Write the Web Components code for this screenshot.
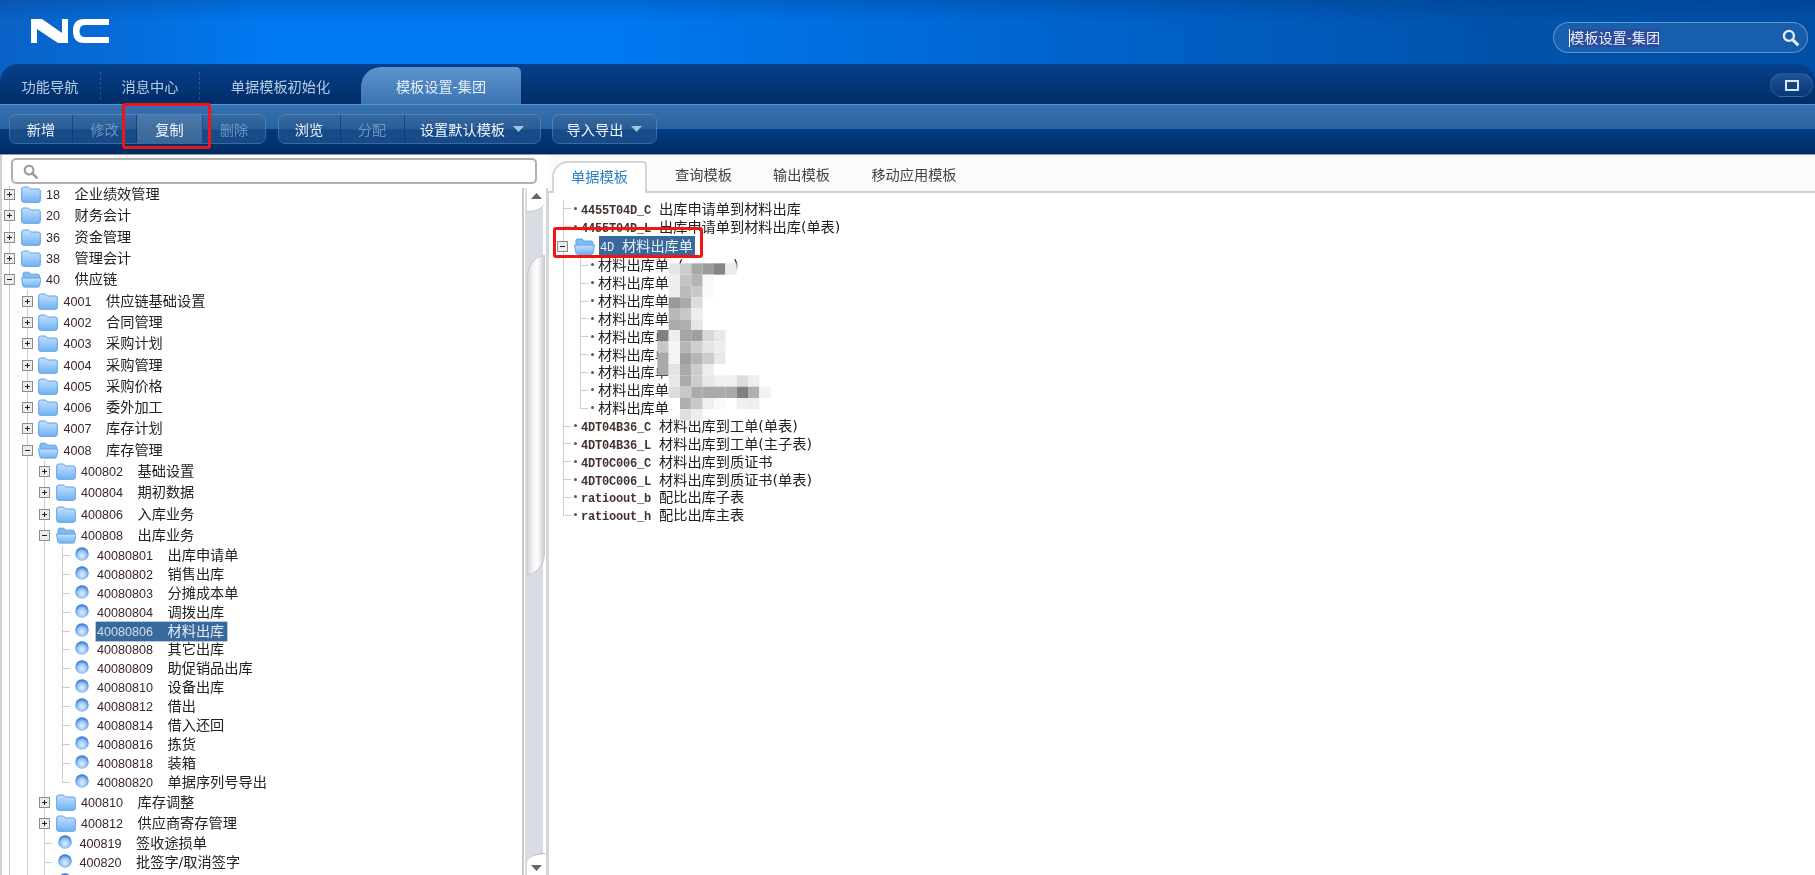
<!DOCTYPE html>
<html lang="zh">
<head>
<meta charset="utf-8">
<title>NC</title>
<style>
html, body { margin: 0; height: 875px; overflow: hidden; background: #fff; }
body { position: relative; font: 14.2px "DejaVu Sans", "Noto Sans CJK SC", sans-serif; color: #222; filter: blur(.35px); }
main-area { height: 720px; }
</style>
</head>
<body>
<nc-header></nc-header>
<nc-tabbar>
  <nc-tab style="width:101px" sep>功能导航</nc-tab>
  <nc-tab style="width:99px" sep>消息中心</nc-tab>
  <nc-tab style="width:161px">单据模板初始化</nc-tab>
  <nc-tab style="width:160px" active>模板设置-集团</nc-tab>
</nc-tabbar>
<nc-toolbar>
  <tool-group>
    <tool-btn style="width:63px">新增</tool-btn>
    <tool-btn style="width:64px" off>修改</tool-btn>
    <tool-btn style="width:66px" active>复制</tool-btn>
    <tool-btn style="width:62px" off>删除</tool-btn>
  </tool-group>
  <tool-group>
    <tool-btn style="width:62px">浏览</tool-btn>
    <tool-btn style="width:64px" off>分配</tool-btn>
    <tool-btn style="width:135px" caret>设置默认模板</tool-btn>
  </tool-group>
  <tool-group>
    <tool-btn style="width:103px" caret>导入导出</tool-btn>
  </tool-group>
</nc-toolbar>
<main-area>
  <side-panel>
    <tree-node num="18" label="企业绩效管理"></tree-node>
    <tree-node num="20" label="财务会计"></tree-node>
    <tree-node num="36" label="资金管理"></tree-node>
    <tree-node num="38" label="管理会计"></tree-node>
    <tree-node num="40" label="供应链" open>
      <tree-node num="4001" label="供应链基础设置"></tree-node>
      <tree-node num="4002" label="合同管理"></tree-node>
      <tree-node num="4003" label="采购计划"></tree-node>
      <tree-node num="4004" label="采购管理"></tree-node>
      <tree-node num="4005" label="采购价格"></tree-node>
      <tree-node num="4006" label="委外加工"></tree-node>
      <tree-node num="4007" label="库存计划"></tree-node>
      <tree-node num="4008" label="库存管理" open>
        <tree-node num="400802" label="基础设置"></tree-node>
        <tree-node num="400804" label="期初数据"></tree-node>
        <tree-node num="400806" label="入库业务"></tree-node>
        <tree-node num="400808" label="出库业务" open>
          <tree-node leaf num="40080801" label="出库申请单"></tree-node>
          <tree-node leaf num="40080802" label="销售出库"></tree-node>
          <tree-node leaf num="40080803" label="分摊成本单"></tree-node>
          <tree-node leaf num="40080804" label="调拨出库"></tree-node>
          <tree-node leaf selected num="40080806" label="材料出库"></tree-node>
          <tree-node leaf num="40080808" label="其它出库"></tree-node>
          <tree-node leaf num="40080809" label="助促销品出库"></tree-node>
          <tree-node leaf num="40080810" label="设备出库"></tree-node>
          <tree-node leaf num="40080812" label="借出"></tree-node>
          <tree-node leaf num="40080814" label="借入还回"></tree-node>
          <tree-node leaf num="40080816" label="拣货"></tree-node>
          <tree-node leaf num="40080818" label="装箱"></tree-node>
          <tree-node leaf last num="40080820" label="单据序列号导出"></tree-node>
        </tree-node>
        <tree-node num="400810" label="库存调整"></tree-node>
        <tree-node num="400812" label="供应商寄存管理"></tree-node>
        <tree-node leaf num="400819" label="签收途损单"></tree-node>
        <tree-node leaf num="400820" label="批签字/取消签字"></tree-node>
        <tree-node leaf></tree-node>
      </tree-node>
    </tree-node>
  </side-panel>
  <template-panel>
    <doc-node num="4455T04D_C" label="出库申请单到材料出库"></doc-node>
    <doc-node num="4455T04D_L" label="出库申请单到材料出库(单表)"></doc-node>
    <doc-node folder selected num="4D" label="材料出库单">
      <doc-node label="材料出库单&#160;&#160;(&#160;&#160;&#160;&#160;&#160;&#160;&#160;&#160;&#160;&#160;&#160;)"></doc-node>
      <doc-node label="材料出库单-"></doc-node>
      <doc-node label="材料出库单"></doc-node>
      <doc-node label="材料出库单"></doc-node>
      <doc-node label="材料出库单"></doc-node>
      <doc-node label="材料出库单"></doc-node>
      <doc-node label="材料出库单"></doc-node>
      <doc-node label="材料出库单-"></doc-node>
      <doc-node last label="材料出库单-"></doc-node>
    </doc-node>
    <doc-node num="4DT04B36_C" label="材料出库到工单(单表)"></doc-node>
    <doc-node num="4DT04B36_L" label="材料出库到工单(主子表)"></doc-node>
    <doc-node num="4DT0C006_C" label="材料出库到质证书"></doc-node>
    <doc-node num="4DT0C006_L" label="材料出库到质证书(单表)"></doc-node>
    <doc-node num="ratioout_b" label="配比出库子表"></doc-node>
    <doc-node last num="ratioout_h" label="配比出库主表"></doc-node>
  </template-panel>
</main-area>
<red-mark style="left:122px;top:103px;width:89px;height:46px"></red-mark>
<red-mark style="left:553px;top:227px;width:150px;height:31px"></red-mark>

<script>
const searchIcon = (color, size) => `<svg width="${size}" height="${size}" viewBox="0 0 16 16"><circle cx="6.5" cy="6.5" r="4.7" fill="none" stroke="${color}" stroke-width="2.2"/><path d="M10 10l4.5 4.5" stroke="${color}" stroke-width="2.8" stroke-linecap="round"/></svg>`;
const headerColors = "linear-gradient(90deg, #0a62c6 0, #0078f0 260px, #0078f0 620px, #0066d2 1000px, #0052aa 1500px, #004fa6 100%)";

class NcHeader extends HTMLElement {
    constructor() {
        super();
        this.shadowDOM = this.attachShadow({mode: "open"});
        this.shadowDOM.innerHTML = `
        <style>
        :host {
            display: flex;
            align-items: flex-start;
            height: 64px;
            background:
                linear-gradient(rgba(0,20,60,.16), rgba(0,20,60,0) 22px),
                ${headerColors};
        }
        svg.logo { margin: 18px 0 0 30px; }
        .search {
            box-sizing: border-box;
            display: flex;
            align-items: center;
            margin: 22px 7px 0 auto;
            width: 255px;
            height: 31px;
            padding: 0 8px 0 15px;
            border: 1px solid rgba(255,255,255,.32);
            border-radius: 16px;
            background: rgba(255,255,255,.09);
        }
        .sel {
            background: #2c4c9c;
            color: #e8eef8;
            border-left: 1px solid #fff;
            line-height: 18px;
            font-size: 14.2px;
        }
        .search svg { margin-left: auto; }
        </style>
        <svg class="logo" width="82" height="27" viewBox="30 18 82 27" fill="#fff">
            <polygon points="31,19 42,19 62,33 62,19 68,19 68,43 58,43 37,29 37,43 31,43"/>
            <path d="M109 19H84Q73 19 73 31Q73 43 84 43H109V37H85Q79.5 37 79.5 31Q79.5 25 85 25H109Z"/>
        </svg>
        <div class="search"><span class="sel">模板设置-集团</span>${searchIcon("#e4ecf6", 17)}</div>
        `;
    }
}

class NcTabbar extends HTMLElement {
    constructor() {
        super();
        this.shadowDOM = this.attachShadow({mode: "open"});
        this.shadowDOM.innerHTML = `
        <style>
        :host {
            display: block;
            height: 40px;
            background: ${headerColors};
        }
        .bar {
            display: flex;
            align-items: flex-end;
            height: 100%;
            border-radius: 18px 18px 0 0;
            background: linear-gradient(#05418c, #012c68);
        }
        .max {
            box-sizing: border-box;
            display: flex;
            align-items: center;
            justify-content: center;
            margin: 0 2px 7px auto;
            width: 43px;
            height: 24px;
            border: 1px solid rgba(255,255,255,.13);
            border-radius: 12px;
            background: linear-gradient(#1c5494, #06387a);
        }
        .max i { box-sizing: border-box; width: 14px; height: 11px; border: 2px solid #dce6f2; }
        </style>
        <div class="bar">
            <slot></slot>
            <div class="max"><i></i></div>
        </div>
        `;
    }
}

class NcTab extends HTMLElement {
    constructor() {
        super();
        this.shadowDOM = this.attachShadow({mode: "open"});
        this.shadowDOM.innerHTML = `
        <style>
        :host {
            box-sizing: border-box;
            display: flex;
            align-items: center;
            justify-content: center;
            height: 37px;
            color: #b9cde4;
        }
        :host([sep]) { border-right: 1px dashed rgba(255,255,255,.16); height: 28px; margin-bottom: 4px; }
        :host([active]) {
            color: #e6eef8;
            border-radius: 20px 5px 0 0;
            background: linear-gradient(#5e94cc, #3a74b3);
        }
        </style>
        <slot></slot>
        `;
    }
}

class NcToolbar extends HTMLElement {
    constructor() {
        super();
        this.shadowDOM = this.attachShadow({mode: "open"});
        this.shadowDOM.innerHTML = `
        <style>
        :host {
            box-sizing: border-box;
            display: flex;
            gap: 11.5px;
            align-items: flex-start;
            height: 51px;
            padding: 9px 0 0 9px;
            border-top: 1px solid #5f90c6;
            border-bottom: 1px solid #8a9cb4;
            background: linear-gradient(#3572b3, #2a629f 48%, #013c82 50%, #012a60);
        }
        </style>
        <slot></slot>
        `;
    }
}

class ToolGroup extends HTMLElement {
    constructor() {
        super();
        this.shadowDOM = this.attachShadow({mode: "open"});
        this.shadowDOM.innerHTML = `
        <style>
        :host {
            box-sizing: border-box;
            display: flex;
            height: 30px;
            border: 1px solid rgba(105,150,200,.55);
            border-radius: 7px;
            overflow: hidden;
        }
        </style>
        <slot></slot>
        `;
    }
}

class ToolBtn extends HTMLElement {
    constructor() {
        super();
        this.shadowDOM = this.attachShadow({mode: "open"});
        const caret = this.hasAttribute("caret") ? `<svg width="11" height="6" viewBox="0 0 11 6"><path d="M0 0h11L5.5 6z" fill="#a9c2de"/></svg>` : "";
        this.shadowDOM.innerHTML = `
        <style>
        :host {
            box-sizing: border-box;
            display: flex;
            align-items: center;
            justify-content: center;
            gap: 8px;
            border-right: 1px solid rgba(10,50,100,.6);
            color: #f0f5fb;
            background: linear-gradient(#36699f, #2a5c96 48%, #164a88 54%, #164a89);
        }
        :host(:last-child) { border-right: 0; }
        :host([off]) { color: #6e96c2; }
        :host([active]) { background: linear-gradient(#4c7aab, #41709f 50%, #376699); }
        </style>
        <slot></slot>${caret}
        `;
    }
}

class MainArea extends HTMLElement {
    constructor() {
        super();
        this.shadowDOM = this.attachShadow({mode: "open"});
        this.shadowDOM.innerHTML = `
        <style>
        :host { display: flex; }
        </style>
        <slot></slot>
        `;
    }
}

class SidePanel extends HTMLElement {
    constructor() {
        super();
        this.shadowDOM = this.attachShadow({mode: "open"});
        this.shadowDOM.innerHTML = `
        <style>
        :host {
            box-sizing: border-box;
            display: flex;
            flex-direction: column;
            flex: 0 0 548px;
            height: 720px;
            box-shadow: inset 2px 0 #d2d2d2;
        }
        .search {
            box-sizing: border-box;
            display: flex;
            align-items: center;
            margin: 3px 11px 2px;
            height: 26px;
            padding-left: 10px;
            border: 2px solid #b0b0b0;
            border-radius: 5px;
            background: #fff;
        }
        .body { flex: 1; display: flex; min-height: 0; }
        .tree {
            flex: 1;
            overflow: hidden;
        }
        .list {
            margin-top: -2px;
            background: linear-gradient(#ccc, #ccc) 9px 0 / 1px 100% no-repeat;
        }
        nc-scrollbar { margin-top: 2px; }
        </style>
        <div class="search">${searchIcon("#9a9a9a", 15)}</div>
        <div class="body">
            <div class="tree"><div class="list"><slot></slot></div></div>
            <nc-scrollbar></nc-scrollbar>
        </div>
        `;
    }
}

class NcScrollbar extends HTMLElement {
    constructor() {
        super();
        this.shadowDOM = this.attachShadow({mode: "open"});
        this.shadowDOM.innerHTML = `
        <style>
        :host {
            box-sizing: border-box;
            display: flex;
            flex-direction: column;
            flex: 0 0 26px;
            padding: 0 1px 0 3px;
            border-left: 2px solid #c9c9c9;
            border-right: 2px solid #d4d4d4;
            background: linear-gradient(#d9dce3, #d9dce3) 1px 0 / 18px 100% no-repeat, #fff;
        }
        .up, .down {
            box-sizing: border-box;
            display: flex;
            justify-content: center;
            background: #fff;
            flex: none;
        }
        .up { height: 24px; padding-top: 5px; border-bottom-right-radius: 100% 45%; border-bottom: 1px solid #bbb; }
        .down { height: 22px; margin-top: auto; padding-top: 11px; border-top-left-radius: 100% 45%; border-top: 1px solid #bbb; }
        .thumb {
            box-sizing: border-box;
            flex: none;
            height: 320px;
            margin-top: 43px;
            border-top-left-radius: 100% 22px;
            border-bottom-right-radius: 100% 22px;
            border: 1px solid #c4c8cf;
            background: linear-gradient(90deg, #d9d9d9, #f6f6f6 35%, #fdfdfd 60%, #cfcfcf);
        }
        </style>
        <div class="up"><svg width="11" height="6" viewBox="0 0 11 6"><path d="M5.5 0L11 6H0z" fill="#666"/></svg></div>
        <div class="thumb"></div>
        <div class="down"><svg width="11" height="6" viewBox="0 0 11 6"><path d="M0 0h11L5.5 6z" fill="#666"/></svg></div>
        `;
    }
}

const folderDefs = (id) => `<defs><linearGradient id="${id}" x1="0" y1="0" x2="0" y2="1"><stop offset="0" stop-color="#c4e0fd"/><stop offset="1" stop-color="#72b2f2"/></linearGradient></defs>`;
const folderClosed = `<svg width="20" height="17" viewBox="0 0 20 17">${folderDefs("f")}<path d="M.7 3Q.7 1 2.7 1H7.5L9.5 3H17.5Q19.3 3 19.3 5V14.5Q19.3 16.3 17.5 16.3H2.5Q.7 16.3.7 14.5Z" fill="url(#f)" stroke="#5aa2e6"/></svg>`;
const folderOpen = `<svg width="21" height="17" viewBox="0 0 21 17">${folderDefs("o")}<path d="M2 3Q2 1 4 1H8L10 3H17Q19 3 19 5V8H2Z" fill="#82bbf3" stroke="#5aa2e6"/><path d="M.5 7H20.5L19 15Q18.7 16.3 17.3 16.3H3.5Q2.2 16.3 2 15Z" fill="url(#o)" stroke="#5aa2e6"/></svg>`;
const expander = (open, size) => `<svg width="${size}" height="${size}" viewBox="0 0 11 11"><rect x=".5" y=".5" width="10" height="10" fill="#ececec" stroke="#8c8c8c"/><path d="M3 5.5h5${open ? "" : "M5.5 3v5"}" stroke="#222" stroke-width="1"/></svg>`;
const ball = `<svg width="14" height="14" viewBox="0 0 14 14"><defs><radialGradient id="b" cx=".5" cy=".62" r=".6"><stop offset="0" stop-color="#e2efff"/><stop offset=".55" stop-color="#98c6f8"/><stop offset="1" stop-color="#2a70d2"/></radialGradient></defs><circle cx="7" cy="7" r="6.7" fill="url(#b)"/></svg>`;

class TreeNode extends HTMLElement {
    constructor() {
        super();
        this.shadowDOM = this.attachShadow({mode: "open"});
    }

    connectedCallback() {
        const leaf = this.hasAttribute("leaf");
        const open = this.hasAttribute("open");
        const num = this.getAttribute("num") || "";
        const label = this.getAttribute("label") || "";
        const lead = leaf
            ? `<span class="tick"></span><span class="ball">${ball}</span>`
            : `<span class="box">${expander(open, 11)}</span><span class="folder">${open ? folderOpen : folderClosed}</span>`;
        this.shadowDOM.innerHTML = `
        <style>
        :host { display: block; }
        .row {
            display: flex;
            align-items: center;
            height: 21.3px;
            white-space: pre;
        }
        :host([leaf]) .row { height: 18.9px; }
        .box { margin-left: 4px; display: flex; }
        .folder { margin-left: 5.5px; width: 20.5px; display: flex; }
        .tick {
            flex: none;
            width: 22.5px;
            height: 100%;
            background: linear-gradient(#ccc, #ccc) 9px 50% / 8px 1px no-repeat;
        }
        :host([last]) .tick {
            background:
                linear-gradient(#ccc, #ccc) 9px 50% / 8px 1px no-repeat,
                linear-gradient(#ccc, #ccc) 9px 0 / 1px 50% no-repeat,
                #fff;
        }
        .ball { display: flex; width: 14px; margin-top: -3px; }
        .text { display: flex; align-items: baseline; height: 19px; line-height: 19px; padding: 0 1px; margin-right: -1px; margin-left: 4px; color: #222; }
        :host([leaf]) .text { margin-left: 7px; }
        :host([selected]) .text { background: #38699d; color: #e4ecf5; box-shadow: 0 0 0 .5px #6d94bd; padding-right: 3px; }
        .num { font: 12.6px/19px "Liberation Sans", sans-serif; color: #3a2530; }
        :host([selected]) .num { color: #d3dfec; }
        .label { margin-left: 14.5px; }
        .kids {
            margin-left: 17.5px;
            background: linear-gradient(#ccc, #ccc) 9px 0 / 1px 100% no-repeat;
        }
        </style>
        <div class="row">${lead}<span class="text"><span class="num">${num}</span><span class="label">${label}</span></span></div>
        ${open ? `<div class="kids"><slot></slot></div>` : ""}
        `;
    }
}

class TemplatePanel extends HTMLElement {
    constructor() {
        super();
        this.shadowDOM = this.attachShadow({mode: "open"});
        this.shadowDOM.innerHTML = `
        <style>
        :host {
            position: relative;
            display: flex;
            flex-direction: column;
            flex: 1;
            height: 720px;
            overflow: hidden;
        }
        .tabs {
            display: flex;
            align-items: flex-end;
            flex: none;
            box-sizing: border-box;
            height: 38px;
            padding: 8px 0 0 4px;
            border-bottom: 2px solid #cfcfcf;
            background: #fbfbfb;
        }
        .tab {
            box-sizing: border-box;
            width: 98px;
            height: 30px;
            line-height: 29px;
            text-align: center;
            color: #444;
        }
        .tab.on {
            width: 95px;
            margin-bottom: -2px;
            height: 32px;
            color: #2b80cc;
            background: #fff;
            border: 2px solid #d6d6d6;
            border-bottom: 0;
            border-radius: 16px 4px 0 0;
            margin-right: 7.5px;
        }
        .tab.wide { width: 120px; margin-left: 3.5px; }
        .body {
            flex: 1;
            padding: 7px 0 0 4px;
            border-left: 1px solid #d8d8d8;
        }
        .list { background: linear-gradient(#ccc, #ccc) 9.5px 0 / 1px 100% no-repeat; }
        mosaic-blur { position: absolute; left: -8px; top: 95px; }
        </style>
        <div class="tabs">
            <div class="tab on">单据模板</div>
            <div class="tab">查询模板</div>
            <div class="tab">输出模板</div>
            <div class="tab wide">移动应用模板</div>
        </div>
        <div class="body"><div class="list"><slot></slot></div></div>
        <mosaic-blur></mosaic-blur>
        `;
    }
}

class DocNode extends HTMLElement {
    constructor() {
        super();
        this.shadowDOM = this.attachShadow({mode: "open"});
    }

    connectedCallback() {
        const folder = this.hasAttribute("folder");
        const num = this.getAttribute("num") || "";
        const label = this.getAttribute("label") || "";
        const lead = folder
            ? `<span class="box">${expander(true, 11)}</span><span class="folder">${folderOpen}</span>`
            : `<span class="tick"></span>`;
        this.shadowDOM.innerHTML = `
        <style>
        :host { display: block; }
        .row { display: flex; align-items: center; height: 17.85px; white-space: pre; }
        :host([folder]) .row { height: 20.8px; }
        .box { display: flex; margin-left: 4px; }
        .folder { display: flex; margin-left: 6px; width: 21px; }
        .tick {
            flex: none;
            position: relative;
            width: 28px;
            height: 100%;
            background: linear-gradient(#ccc, #ccc) 9.5px 50% / 8px 1px no-repeat;
        }
        :host([last]) .tick {
            background:
                linear-gradient(#ccc, #ccc) 9.5px 50% / 8px 1px no-repeat,
                linear-gradient(#ccc, #ccc) 9.5px 0 / 1px 50% no-repeat,
                #fff;
        }
        .tick::after {
            content: "";
            position: absolute;
            left: 21px;
            top: 7px;
            width: 3px;
            height: 3px;
            border-radius: 50%;
            background: #555;
        }
        .text { display: flex; align-items: baseline; height: 20px; line-height: 20px; }
        .num { font: 700 12px/20px "Liberation Mono", monospace; letter-spacing: -.2px; color: #43322e; margin-right: 8px; }
        .label { color: #222; }
        :host([folder]) .text { margin-left: 4px; padding: 0 2px 0 1px; }
        :host([selected]) .text { background: #38699d; }
        :host([selected]) .num, :host([selected]) .label { color: #e8eff7; }
        :host([selected]) .num { font-weight: 400; }
        .kids {
            margin-left: 17px;
            background: linear-gradient(#ccc, #ccc) 9.5px 0 / 1px 100% no-repeat;
        }
        </style>
        <div class="row">${lead}<span class="text">${num ? `<span class="num">${num}</span>` : ""}<span class="label">${label}</span></span></div>
        ${folder ? `<div class="kids"><slot></slot></div>` : ""}
        `;
    }
}

class MosaicBlur extends HTMLElement {
    constructor() {
        super();
        this.shadowDOM = this.attachShadow({mode: "open"});
        // gray cells read off the reference, one array per row, starting at column 0 = x 352
        const rows = [
            [40, ["", "#e6e6e6", "#ccc", "#a8a8a8", "#9c9c9c", "#858585", "#ececec"]],
            [74, ["", "#eee", "#c4c4c4", "#b4b4b4", "#f8f8f8"]],
            [108, ["", "#eee", "#bbb", "#c8c8c8", "#fafafa"]],
            [142, ["", "#999", "#aaa", "#ddd"]],
            [176, ["", "#b8b8b8", "#c8c8c8", "#eee"]],
            [210, ["", "#aaa", "#b0b0b0", "#e5e5e5"]],
            [240, ["#808080", "#eee", "#a5a5a5", "#9f9f9f", "#d8d8d8", "#e8e8e8"]],
            [274, ["#c8c8c8", "#f5f5f5", "#b5b5b5", "#cfcfcf", "#e5e5e5", "#eee"]],
            [308, ["#aaa", "#f8f4f2", "#a0a0a0", "#b5b5b5", "#ccc", "#e8e8e8"]],
            [342, ["#aaa", "#e0e4e4", "#aaa", "#ccc", "#eee"]],
            [376, ["", "#e8e8e8", "#aaa", "#ccc", "#e8e8e8", "#f0f0f0", "#f0f0f0", "#ddd", "#eee"]],
            [410, ["", "#ddd", "#c8c8c8", "#aaa", "#aaa", "#aaa", "#aaa", "#808080", "#b0b0b0", "#f2f2f2"]],
            [444, ["", "#fff", "#b0b0b0", "#c8c8c8", "#f0f0f0", "#fafafa", "", "#f0f0f0", "#eee"]],
            [478, ["", "", "#e0e0e0", "#eee"]]
        ];
        let cells = "";
        rows.forEach(([y, row]) => {
            row.forEach((fill, i) => {
                if (fill) cells += `<rect x="${352 + i * 34}" y="${y}" width="34" height="34" fill="${fill}"/>`;
            });
        });
        this.shadowDOM.innerHTML = `
        <style>
        :host { display: block; width: 300px; height: 180px; pointer-events: none; }
        svg { display: block; }
        </style>
        <svg width="300" height="180" viewBox="0 0 900 540">${cells}</svg>
        `;
    }
}

class RedMark extends HTMLElement {
    constructor() {
        super();
        this.shadowDOM = this.attachShadow({mode: "open"});
        this.shadowDOM.innerHTML = `
        <style>
        :host {
            position: absolute;
            box-sizing: border-box;
            border: 3px solid #f01414;
            border-radius: 3px;
        }
        </style>
        `;
    }
}

customElements.define("nc-header", NcHeader);
customElements.define("nc-tabbar", NcTabbar);
customElements.define("nc-tab", NcTab);
customElements.define("nc-toolbar", NcToolbar);
customElements.define("tool-group", ToolGroup);
customElements.define("tool-btn", ToolBtn);
customElements.define("main-area", MainArea);
customElements.define("nc-scrollbar", NcScrollbar);
customElements.define("side-panel", SidePanel);
customElements.define("tree-node", TreeNode);
customElements.define("mosaic-blur", MosaicBlur);
customElements.define("template-panel", TemplatePanel);
customElements.define("doc-node", DocNode);
customElements.define("red-mark", RedMark);
</script>
</body>
</html>
